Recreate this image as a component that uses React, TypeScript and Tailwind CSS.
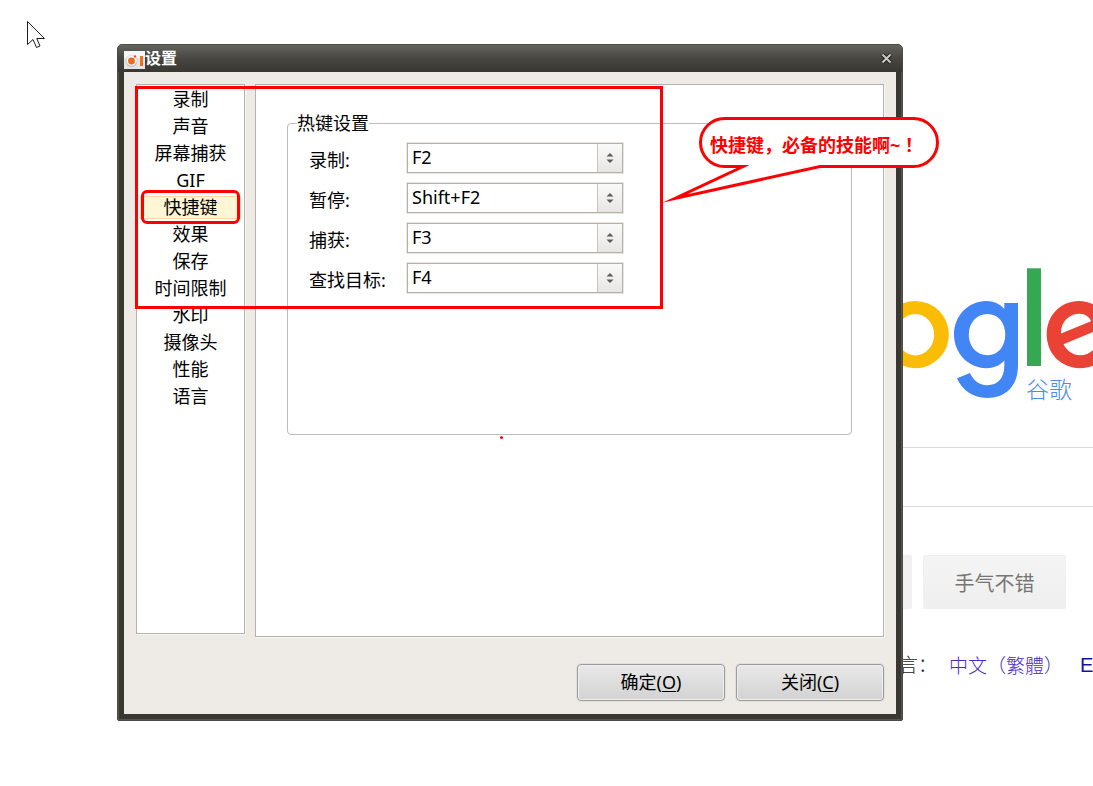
import React from "react";

const categories = [
  "录制", "声音", "屏幕捕获", "GIF", "快捷键", "效果",
  "保存", "时间限制", "水印", "摄像头", "性能", "语言",
];

const hotkeys = [
  { id: "record", label: "录制:", value: "F2" },
  { id: "pause", label: "暂停:", value: "Shift+F2" },
  { id: "capture", label: "捕获:", value: "F3" },
  { id: "find", label: "查找目标:", value: "F4" },
];

const keyOptions = ["F2", "Shift+F2", "F3", "F4"];

function RecorderIcon() {
  return (
    <svg width="21" height="18" viewBox="0 0 21 18" aria-hidden="true">
      <rect width="21" height="18" fill="#e4e4e4" />
      <rect width="21" height="7" fill="#f6f6f6" />
      <circle cx="7.5" cy="10" r="6" fill="#c4c4c4" />
      <circle cx="7.5" cy="9.4" r="5.2" fill="#f5f5f5" />
      <circle cx="7.5" cy="10" r="3.4" fill="#ea6a1e" />
      <circle cx="11" cy="5.4" r="1.2" fill="#d9542b" />
      <rect x="16" y="5" width="3" height="10" fill="#f0701c" />
    </svg>
  );
}

function HotkeyRow({ id, label, value }: { id: string; label: string; value: string }) {
  return (
    <div className="flex h-[30px] items-center">
      <label htmlFor={id} className="w-[98px] shrink-0 whitespace-nowrap pt-1">
        {label}
      </label>
      <div className="relative h-[30px] w-[216px]">
        <select
          id={id}
          defaultValue={value}
          className="h-full w-full appearance-none border border-[#b5b1ac] bg-white pb-0.5 pl-1 pr-7 leading-6 text-black outline outline-[#e9e6e2]"
        >
          {keyOptions.map((key) => (
            <option key={key}>{key}</option>
          ))}
        </select>
        <span className="pointer-events-none absolute inset-y-px right-px flex w-[25px] items-center justify-center border-l border-[#c8c4c0] bg-linear-to-b from-[#fafafa] to-[#e8e6e4]">
          <svg width="8" height="10" viewBox="0 0 8 10" aria-hidden="true">
            <path d="M4 0 7.500 3.500H0.500ZM0.500 6.500H7.500L4 10Z" fill="#5c5c58" />
          </svg>
        </span>
      </div>
    </div>
  );
}

function DialogButton({ text, accessKey }: { text: string; accessKey: string }) {
  return (
    <button
      type="button"
      className="h-[37px] w-[148px] rounded-[4px] border border-[#9b9b9b] bg-linear-to-b from-[#e9e9e9] to-[#d2d2d2] shadow-[inset_0_0_0_1px_#efefef,0_0_0_1px_#e3e0db]"
    >
      {text}(<span className="underline underline-offset-2">{accessKey}</span>)
    </button>
  );
}

function SearchPage() {
  return (
    <aside className="w-[190px] shrink-0 overflow-hidden pt-[222px]">
      <svg width="190" height="136" viewBox="903 266 190 136" role="img" aria-label="Google 谷歌">
        <path
          fillRule="evenodd"
          fill="#fbbc05"
          d="M915.3 301a33.6 33.6 0 1 0 0 67.2a33.6 33.6 0 0 0 0-67.2ZM915.3 314a18.8 20.7 0 1 1 0 41.4a18.8 20.7 0 0 1 0-41.4Z"
        />
        <path
          fillRule="evenodd"
          fill="#4285f4"
          d="M1004.3 303H1018V365C1018 387 1005 398 987 398C973 398 962 390 957 378.3L970 373C973 380 979 385.2 987 385.2C998 385.2 1004.3 378 1004.3 366V360.5C1000 365.500 993.500 368.200 986.500 368.200C968 368.200 954 353 954 334.600C954 316 968 301 986.500 301C993.500 301 1000 303.800 1004.300 309ZM987.500 314C977 314 968.800 322.500 968.800 334.600C968.800 346.700 977 355.300 987.500 355.300C998 355.300 1005.300 346.700 1005.300 334.600C1005.300 322.500 998 314 987.500 314Z"
        />
        <rect x="1027" y="268.300" width="14" height="97.700" fill="#34a853" />
        <path
          fill="#ea4335"
          d="M1106 355.500C1100 363.500 1091 368.200 1080 368.200C1061 368.200 1046.700 353.500 1046.700 334.600C1046.700 315 1061 301 1079 301C1096 301 1105 313 1109 325.500L1063.500 344.300C1067 351 1073 355.300 1080 355.300C1087 355.300 1092 352 1096 347ZM1061 333.500L1091 321.300C1089.500 316.500 1084.500 313.800 1079 313.800C1070 313.800 1060.500 321.500 1061 333.500Z"
        />
        <text
          x="1026"
          y="398"
          fill="#4a8af4"
          fontSize="23"
          className="font-['Noto_Sans_CJK_SC',sans-serif] font-light"
        >
          谷歌
        </text>
      </svg>
      <div className="mt-[45px] h-[60px] border-y border-[#d9d9d9]" />
      <div className="mt-12 flex gap-[11px]">
        <span className="h-[54px] w-[9px] shrink-0 rounded-r-[2px] border border-l-0 border-[#f0f0f0] bg-[#f1f1f1]" />
        <button
          type="button"
          className="h-[54px] w-[143px] shrink-0 rounded-[2px] border border-[#f0f0f0] bg-linear-to-b from-[#f4f4f4] to-[#efefef] pt-1 text-[20px] text-[#757575]"
        >
          手气不错
        </button>
      </div>
      <p className="mt-[42px] flex whitespace-nowrap text-[19px] leading-7 text-[#222222] font-light">
        <span className="-ml-1 w-[46px] shrink-0">言：</span>
        <a href="#zh-hant" className="ml-1 w-[131px] shrink-0 font-['Noto_Sans_CJK_TC',sans-serif] text-[#4a2bc4]">
          中文（繁體）
        </a>
        <a href="#en" className="font-['Liberation_Sans',sans-serif] text-[20px] font-normal text-[#1a0dab]">
          English
        </a>
      </p>
    </aside>
  );
}

function Annotations() {
  return (
    <div className="pointer-events-none">
      <div className="absolute left-[17px] top-[41px] h-[223px] w-[528px] border-3 border-[#ff0000]" />
      <div className="absolute left-[23px] top-[145px] h-[34px] w-[99px] rounded-[6px] border-3 border-[#ff0000]" />
      <div className="absolute left-[382px] top-[391px] size-[3px] rounded-full bg-[#ff0000]" />
      <div className="absolute left-[542px] top-[69px] h-[92px] w-[282px] pl-[50px] pt-3">
        <svg
          className="absolute left-0 top-0"
          width="282"
          height="92"
          viewBox="660 114 282 92"
          aria-hidden="true"
        >
          <path
            d="M743 166.500H724.500A24 24 0 0 1 724.500 118.500H913.500A24 24 0 0 1 913.500 166.500H820L675 198.500L743 166.500Z"
            fill="#ffffff"
            stroke="#ff0000"
            strokeWidth="3"
            strokeMiterlimit="14"
          />
        </svg>
        <p className="relative whitespace-nowrap leading-9 font-bold text-[#ff0000]">
          快捷键<span className="font-['Noto_Sans_CJK_SC',sans-serif]">，</span>必备的技能啊~
          <span className="font-['Noto_Sans_CJK_TC',sans-serif]">！</span>
        </p>
      </div>
    </div>
  );
}

export default function App() {
  return (
    <div className="relative flex min-h-screen items-start overflow-hidden bg-white pl-[117px] pt-11 font-['Noto_Sans','Noto_Sans_CJK_SC',sans-serif] text-[18px] text-black">
      <svg className="absolute left-[26px] top-5" width="20" height="30" viewBox="0 0 20 30" aria-hidden="true">
        <path
          d="M1.500 1.500V24.500L7 19.500L10.500 27.500L14 26L10.800 18.500H18.500Z"
          fill="#ffffff"
          stroke="#1b1b26"
          strokeWidth="1"
        />
      </svg>

      <section
        aria-label="设置"
        className="relative z-10 min-w-0 flex-1 rounded-t-[5px] rounded-b-[2px] border border-[#4b4a46] bg-[#383731] px-1.5 pb-1.5 shadow-[inset_0_0_0_1px_#56554f]"
      >
        <header className="-mx-1.5 flex h-[27px] items-center rounded-t-[4px] bg-linear-to-b from-[#64645f] via-[#474641] to-[#383731] px-1.5">
          <div className="pt-0.5">
            <RecorderIcon />
          </div>
          <h1 className="pb-0.5 text-[16px] leading-6 font-bold text-white">设置</h1>
          <button type="button" aria-label="关闭窗口" className="ml-auto mr-1 flex size-[11px] items-center justify-center">
            <svg width="11" height="11" viewBox="0 0 11 11" aria-hidden="true">
              <path d="M1.500 1.500 9.500 9.500M9.500 1.500 1.500 9.500" stroke="#24231f" strokeWidth="4" />
              <path d="M1.500 1.500 9.500 9.500M9.500 1.500 1.500 9.500" stroke="#c9c8c4" strokeWidth="2" />
            </svg>
          </button>
        </header>

        <div className="bg-[#eeebe6] px-3 pb-[13px] pt-3">
          <div className="flex items-start gap-2.5">
            <nav aria-label="设置分类" className="min-h-[550px] w-[109px] shrink-0 border border-[#b5b1ad] bg-white px-1 pt-px shadow-[1px_1px_0_#f8f7f5]">
              <ul>
                {categories.map((name) => (
                  <li key={name} className="h-[27px] py-[3px]">
                    <a
                      href={"#" + name}
                      className={
                        name === "快捷键"
                          ? "flex h-[21px] items-center justify-center bg-[#fff6d5] outline outline-[#f8d9a4]"
                          : "flex h-[21px] items-center justify-center"
                      }
                    >
                      {name}
                    </a>
                  </li>
                ))}
              </ul>
            </nav>
            <div className="min-h-[553px] min-w-0 flex-1 border border-[#b5b1ad] bg-white px-[31px] pt-[26px] shadow-[1px_1px_0_#f8f7f5]">
              <fieldset className="min-h-[324px] rounded-[4px] border border-[#bfbbb9] pl-[21px]">
                <legend className="-ml-3 leading-6">热键设置</legend>
                <div className="flex flex-col gap-2.5 pt-2">
                  {hotkeys.map((hotkey) => (
                    <HotkeyRow key={hotkey.id} {...hotkey} />
                  ))}
                </div>
              </fieldset>
            </div>
          </div>
          <footer className="mt-[27px] flex justify-end gap-[11px]">
            <DialogButton text="确定" accessKey="O" />
            <DialogButton text="关闭" accessKey="C" />
          </footer>
        </div>
        <Annotations />
      </section>

      <SearchPage />
    </div>
  );
}
